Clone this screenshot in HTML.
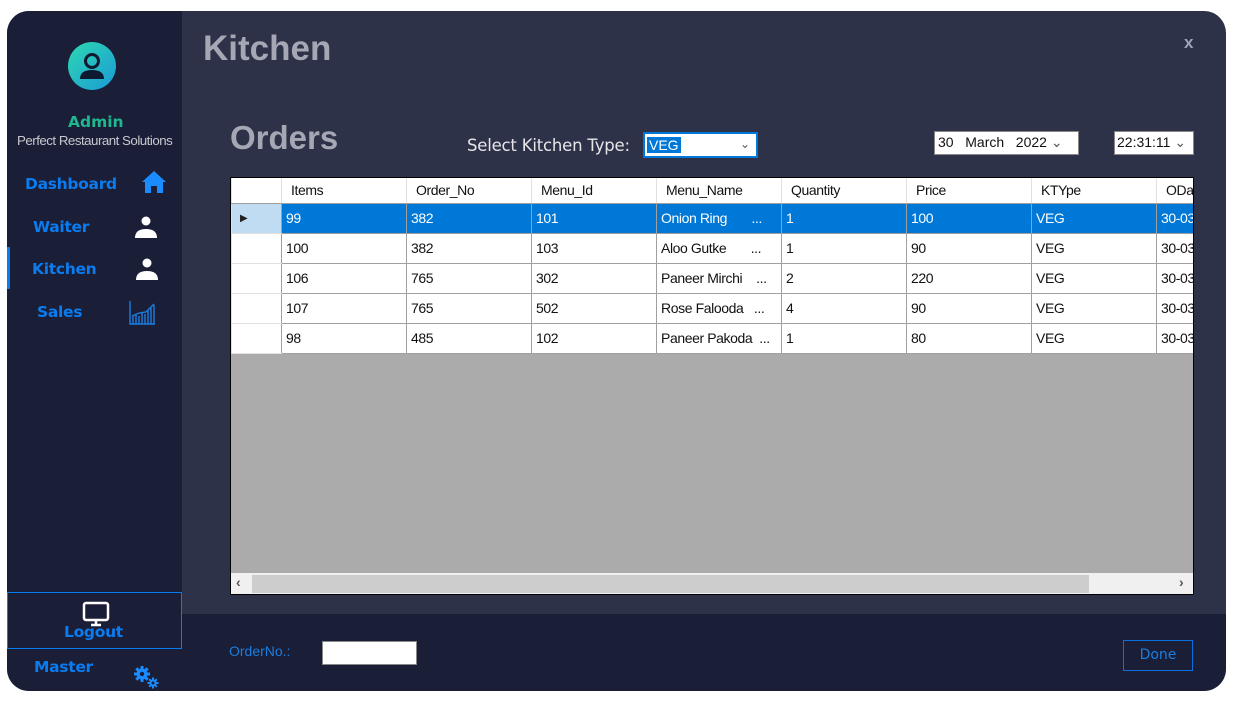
<!DOCTYPE html>
<html><head><meta charset="utf-8"><style>
*{margin:0;padding:0;box-sizing:border-box}
body{width:1236px;height:704px;background:#fff;position:relative;overflow:hidden;font-family:"Liberation Sans",sans-serif}
.win{position:absolute;left:7px;top:11px;width:1219px;height:680px;background:#2e3248;border-radius:22px;overflow:hidden}
.side{position:absolute;left:0;top:0;width:175px;height:680px;background:#1a1e36}
.bot{position:absolute;left:175px;top:603px;width:1044px;height:77px;background:#1a1e36}
.a{position:absolute;white-space:nowrap}
.nav{font-weight:bold;color:#0a7cf0;font-size:15.5px;font-family:"DejaVu Sans",sans-serif;letter-spacing:-0.3px}
table{border-collapse:collapse;font-size:14px;letter-spacing:-0.4px}
td{height:30px;border:1px solid #a0a0a0;padding-left:4px;background:#fff;color:#111;white-space:nowrap;overflow:hidden}
tr.h td{height:25px;border-top:none;border-color:#e0e0e0;border-bottom:1px solid #a0a0a0;padding-left:9px}
tr.s td{background:#0078d7;color:#fff}
td.rh{background:#fff;border-color:#e0e0e0;border-right:1px solid #a0a0a0}
tr.s td.rh{background:#bfdcf2}
</style></head><body>
<div class="win">
<div class="side"></div>
<div class="bot"></div>
<div class="a" style="left:61px;top:31px;width:48px;height:48px;border-radius:50%;background:linear-gradient(135deg,#2ed8b0,#1a9ad8)">
<svg width="48" height="48" viewBox="0 0 48 48"><circle cx="24" cy="19" r="6.5" fill="none" stroke="#0e1a30" stroke-width="3"/><path d="M12 37 Q12 28 24 28 Q36 28 36 37 Z" fill="#0e1a30"/></svg></div>
<div class="a" style="left:61px;top:102px;font-weight:bold;color:#1db890;font-size:15.5px;font-family:'DejaVu Sans',sans-serif">Admin</div>
<div class="a" style="left:10px;top:122px;color:#c8c8d0;font-size:13.3px;letter-spacing:-0.5px">Perfect Restaurant Solutions</div>
<div class="a nav" style="left:18px;top:164px">Dashboard</div>
<svg class="a" style="left:134px;top:159px" width="26" height="24" viewBox="0 0 26 24"><path d="M13 1 L25 12 L22 12 L22 23 L16 23 L16 16 L10 16 L10 23 L4 23 L4 12 L1 12 Z" fill="#1a8cff"/></svg>
<div class="a nav" style="left:26px;top:207px">Waiter</div>
<svg class="a" style="left:127px;top:204px" width="24" height="24" viewBox="0 0 24 24"><circle cx="12" cy="6" r="4.5" fill="#fff"/><path d="M1 23 Q1 14 12 14 Q23 14 23 23 Z" fill="#fff"/></svg>
<div class="a" style="left:0;top:236px;width:3px;height:42px;background:#0a7cf0"></div>
<div class="a nav" style="left:25px;top:249px">Kitchen</div>
<svg class="a" style="left:128px;top:246px" width="24" height="24" viewBox="0 0 24 24"><circle cx="12" cy="6" r="4.5" fill="#fff"/><path d="M1 23 Q1 14 12 14 Q23 14 23 23 Z" fill="#fff"/></svg>
<div class="a nav" style="left:30px;top:292px">Sales</div>
<svg class="a" style="left:122px;top:289px" width="27" height="25" viewBox="0 0 27 25"><path d="M1 1 V24 H26 M4 24 V15 M7 24 V14 M10 24 V16 M13 24 V13 M16 24 V14 M19 24 V10 M22 24 V8 M25 24 V5 M3 16 L10 13 L17 12 L25 4" stroke="#1a7ee0" stroke-width="1.4" fill="none"/></svg>
<div class="a" style="left:0;top:581px;width:175px;height:57px;border:1px solid #0a7cf0"></div>
<svg class="a" style="left:75px;top:590px" width="28" height="26" viewBox="0 0 28 26"><rect x="2" y="2" width="24" height="17" rx="2" fill="none" stroke="#fff" stroke-width="2.5"/><path d="M14 19 V23 M9 24 H19" stroke="#fff" stroke-width="2.5"/></svg>
<div class="a nav" style="left:57px;top:612px">Logout</div>
<div class="a nav" style="left:27px;top:647px">Master</div>
<svg class="a" style="left:126px;top:654px" width="28" height="26" viewBox="0 0 28 26">
<g fill="#1a8cff"><circle cx="9" cy="9" r="5.5"/><g stroke="#1a8cff" stroke-width="3"><path d="M9 1 V17 M1 9 H17 M3.3 3.3 L14.7 14.7 M14.7 3.3 L3.3 14.7"/></g>
<circle cx="20" cy="18" r="3.5"/><g stroke="#1a8cff" stroke-width="2"><path d="M20 12.5 V23.5 M14.5 18 H25.5 M16.2 14.2 L23.8 21.8 M23.8 14.2 L16.2 21.8"/></g></g>
<circle cx="9" cy="9" r="2.2" fill="#1a1e36"/><circle cx="20" cy="18" r="1.5" fill="#1a1e36"/></svg>

<div class="a" style="left:196px;top:18px;font-size:35px;font-weight:bold;color:#a6a7b4">Kitchen</div>
<div class="a" style="left:1177px;top:22px;font-size:17px;font-weight:bold;color:#9fa3bc">x</div>
<div class="a" style="left:223px;top:108px;font-size:33px;font-weight:bold;color:#a6a7b4">Orders</div>
<div class="a" style="left:460px;top:125px;font-size:16.5px;color:#e6e6ea;font-family:'DejaVu Sans',sans-serif;letter-spacing:-0.2px">Select Kitchen Type:</div>
<div class="a" style="left:636px;top:121px;width:115px;height:26px;background:#fff;border:2px solid #0078d7;font-size:14px">
<span style="position:absolute;left:2px;top:3px;background:#0078d7;color:#fff;padding:0 2px">VEG</span>
<span style="position:absolute;right:6px;top:3px;color:#555;font-size:12px">&#8964;</span></div>
<div class="a" style="left:927px;top:120px;width:145px;height:24px;background:#fff;border:1px solid #888;font-size:14px;color:#111;padding:2px 3px">30&nbsp;&nbsp;&nbsp;March&nbsp;&nbsp;&nbsp;2022 <span style="color:#555">&#8964;</span></div>
<div class="a" style="left:1107px;top:120px;width:80px;height:24px;background:#fff;border:1px solid #888;font-size:14px;color:#111;padding:2px 2px">22:31:11 <span style="color:#555">&#8964;</span></div>

<div class="a" style="left:223px;top:166px;width:964px;height:418px;background:#ababab;border:1px solid #000;overflow:hidden">
<table style="table-layout:fixed;width:1000px">
<colgroup><col style="width:50px"><col style="width:125px"><col style="width:125px"><col style="width:125px"><col style="width:125px"><col style="width:125px"><col style="width:125px"><col style="width:125px"><col style="width:75px"></colgroup>
<tr class="h"><td class="rh"></td><td>Items</td><td>Order_No</td><td>Menu_Id</td><td>Menu_Name</td><td>Quantity</td><td>Price</td><td>KTYpe</td><td>ODate</td></tr>
<tr class="s"><td class="rh" style="color:#222;font-size:10px;padding-left:8px">&#9654;</td><td>99</td><td>382</td><td>101</td><td>Onion Ring&nbsp;&nbsp;&nbsp;&nbsp;&nbsp;&nbsp;&nbsp;...</td><td>1</td><td>100</td><td>VEG</td><td>30-03</td></tr>
<tr><td class="rh"></td><td>100</td><td>382</td><td>103</td><td>Aloo Gutke&nbsp;&nbsp;&nbsp;&nbsp;&nbsp;&nbsp;&nbsp;...</td><td>1</td><td>90</td><td>VEG</td><td>30-03</td></tr>
<tr><td class="rh"></td><td>106</td><td>765</td><td>302</td><td>Paneer Mirchi&nbsp;&nbsp;&nbsp;&nbsp;...</td><td>2</td><td>220</td><td>VEG</td><td>30-03</td></tr>
<tr><td class="rh"></td><td>107</td><td>765</td><td>502</td><td>Rose Falooda&nbsp;&nbsp;&nbsp;...</td><td>4</td><td>90</td><td>VEG</td><td>30-03</td></tr>
<tr><td class="rh"></td><td>98</td><td>485</td><td>102</td><td>Paneer Pakoda&nbsp;&nbsp;...</td><td>1</td><td>80</td><td>VEG</td><td>30-03</td></tr>
</table>
<div class="a" style="left:0;top:395px;width:964px;height:22px;background:#f0f0f0">
<div class="a" style="left:21px;top:2px;width:837px;height:18px;background:#cdcdcd"></div>
<div class="a" style="left:5px;top:1px;font-size:14px;color:#555;font-weight:bold">&lsaquo;</div>
<div class="a" style="left:948px;top:1px;font-size:14px;color:#555;font-weight:bold">&rsaquo;</div>
</div>
</div>

<div class="a" style="left:222px;top:632px;font-size:14px;color:#1a7ee0">OrderNo.:</div>
<div class="a" style="left:315px;top:630px;width:95px;height:24px;background:#fff;border:1px solid #888"></div>
<div class="a" style="left:1116px;top:629px;width:70px;height:31px;border:1.5px solid #0a70e0;color:#1a7ee0;font-size:14px;text-align:center;line-height:29px;font-family:'DejaVu Sans',sans-serif">Done</div>
</div>
</body></html>
